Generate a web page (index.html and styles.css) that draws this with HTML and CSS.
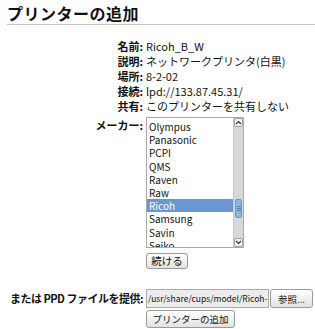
FILE: index.html
```html
<!DOCTYPE html>
<html lang="ja">
<head>
  <meta charset="UTF-8" />
  <title>プリンターの追加</title>
  <link rel="stylesheet" href="styles.css">
</head>
<body>
  <h2 class="title">プリンターの追加</h2>

  <div class="form">
    <!-- printer info -->
    <span class="label">名前:</span><span class="value">Ricoh_B_W</span>
    <span class="label">説明:</span><span class="value">ネットワークプリンタ(白黒)</span>
    <span class="label">場所:</span><span class="value">8-2-02</span>
    <span class="label">接続:</span><span class="value">lpd://133.87.45.31/</span>
    <span class="label">共有:</span><span class="value">このプリンターを共有しない</span>

    <!-- maker list -->
    <span class="label maker-label">メーカー:</span>
    <div class="field maker-field">
      <div class="listbox">
        <ul class="options">
          <li>Olympus</li>
          <li>Panasonic</li>
          <li>PCPI</li>
          <li>QMS</li>
          <li>Raven</li>
          <li>Raw</li>
          <li class="selected">Ricoh</li>
          <li>Samsung</li>
          <li>Savin</li>
          <li>Seiko</li>
        </ul>
        <div class="scrollbar">
          <div class="arrow">
            <svg width="7" height="5" viewBox="0 0 7 5"><path d="M1 4 L3.5 1.5 L6 4" fill="none" stroke="#333" stroke-width="1.2"/></svg>
          </div>
          <div class="track">
            <div class="thumb"><span></span><span></span><span></span></div>
          </div>
          <div class="arrow">
            <svg width="7" height="5" viewBox="0 0 7 5"><path d="M1 1 L3.5 3.5 L6 1" fill="none" stroke="#333" stroke-width="1.2"/></svg>
          </div>
        </div>
      </div>
      <button class="btn">続ける</button>
    </div>

    <!-- ppd file -->
    <span class="label ppd-label">または PPD ファイルを提供:</span>
    <div class="field ppd-field">
      <div class="file">
        <span class="file-path">/usr/share/cups/model/Ricoh-B_W.ppd</span>
        <button class="btn">参照...</button>
      </div>
      <button class="btn">プリンターの追加</button>
    </div>
  </div>
</body>
</html>
```

FILE: styles.css
```css
* {
  box-sizing: border-box;
}

body {
  margin: 0;
  background: #fff;
  color: #111;
  font-family: "Liberation Sans Narrow", "Noto Sans CJK JP", sans-serif;
  font-size: 11px;
}

.title {
  margin: 0 0 14px 7px;
  padding-top: 3px;
  height: 25px;
  font-family: "Noto Sans CJK JP", sans-serif;
  font-size: 16px;
  line-height: 20px;
  font-weight: bold;
  letter-spacing: 0.5px;
  border-bottom: 1px solid #c4c4c4;
}

.form {
  display: grid;
  grid-template-columns: 145px 1fr;
  column-gap: 1px;
  line-height: 15px;
}

.label {
  padding-right: 2px;
  text-align: right;
  font-weight: bold;
  white-space: nowrap;
}

.value {
  white-space: nowrap;
}

.maker-label {
  margin-top: 3px;
  padding-top: 1px;
}

.field {
  display: flex;
  flex-direction: column;
  align-items: flex-start;
}

.maker-field {
  margin-top: 3px;
}

.listbox {
  display: flex;
  width: 98px;
  height: 131px;
  border: 1px solid #a9a9a9;
  overflow: hidden;
}

.options {
  flex: 1;
  margin: 0;
  padding: 2px 0 0;
  list-style: none;
  font-size: 10px;
  line-height: 13.2px;
}

.options li {
  height: 13.2px;
  padding-left: 2px;
}

.options .selected {
  background: #6b96d2;
  color: #fff;
}

.scrollbar {
  display: flex;
  flex-direction: column;
  width: 10px;
  background: #d8d8d8;
  border-left: 1px solid #c8c8c8;
}

.arrow {
  height: 9px;
  display: flex;
  align-items: center;
  justify-content: center;
  background: #f4f4f4;
  border: 1px solid #a0a0a0;
  border-radius: 2px;
}

.track {
  flex: 1;
  padding-top: 72px;
}

.thumb {
  height: 19px;
  margin: 0 1px;
  background: #8fb4e6;
  border: 1px solid #6a92cc;
  border-radius: 2px;
  display: flex;
  flex-direction: column;
  justify-content: center;
  align-items: center;
  gap: 1px;
}

.thumb span {
  width: 4px;
  height: 1px;
  background: #4f78b4;
}

.btn {
  height: 16px;
  padding: 0;
  font-family: "Noto Sans CJK JP", sans-serif;
  font-size: 9.5px;
  line-height: 14px;
  color: #111;
  background: linear-gradient(#ffffff, #e2e2e2);
  border: 1px solid #9a9a9a;
  border-radius: 3px;
}

.maker-field .btn {
  margin-top: 5px;
  width: 42px;
  font-size: 10.5px;
}

.ppd-label {
  margin-top: 20px;
  line-height: 19px;
  letter-spacing: -0.5px;
}

.ppd-field {
  margin-top: 20px;
  gap: 2px;
}

.file {
  display: flex;
  gap: 1px;
}

.file-path {
  width: 123px;
  height: 19px;
  padding: 0 1px;
  overflow: hidden;
  white-space: nowrap;
  font-size: 8.5px;
  line-height: 17px;
  background: #ececec;
  border: 1px solid #a9a9a9;
}

.file .btn {
  height: 19px;
  width: 43px;
}

.ppd-field > .btn {
  height: 18px;
  width: 89px;
}
```
